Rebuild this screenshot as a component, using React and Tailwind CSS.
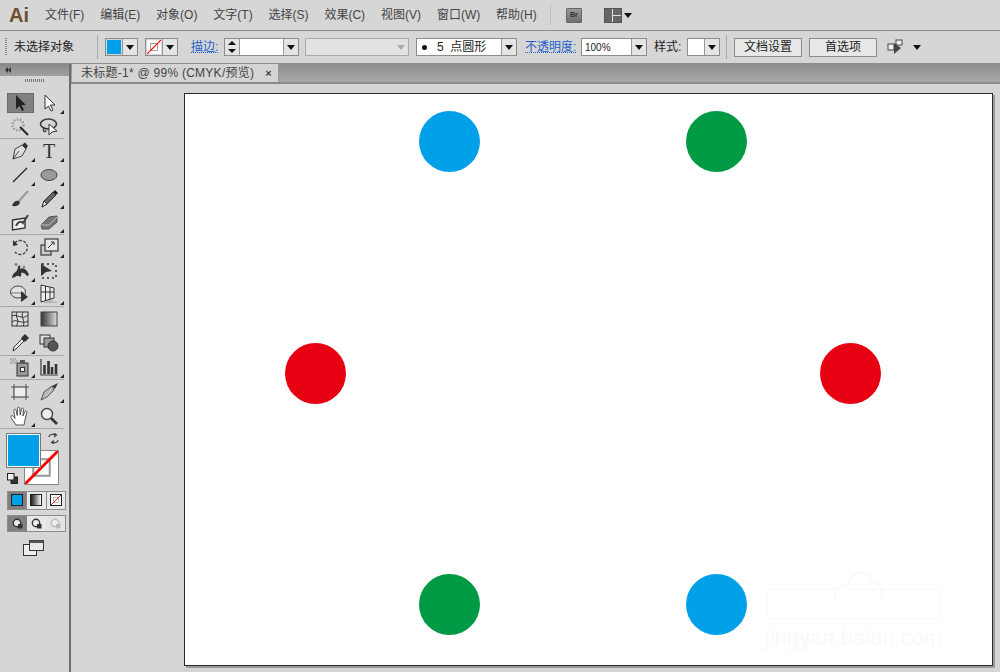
const S = { fill: "none", stroke: "#3a3a3a", strokeWidth: 1.2 };

function Ico({ children, w = 20, h = 20 }) {
  return (
    <svg width={w} height={h} viewBox="0 0 20 20" className="block">
      {children}
    </svg>
  );
}

const icons = {
  arrow: <path d="M6 2 L6 16 L9.5 13 L12 18 L14 17 L11.5 12 L16 12 Z" fill="#222" />,
  white: <path d="M6 2 L6 16 L9.5 13 L12 18 L14 17 L11.5 12 L16 12 Z" fill="#fff" stroke="#333" strokeWidth="1" />,
  magic: (
    <g>
      <circle cx="8" cy="8" r="5.5" fill="none" stroke="#999" strokeWidth="2.4" strokeDasharray="1.5 1.5" />
      <path d="M10 10 L18 18" stroke="#222" strokeWidth="2" />
    </g>
  ),
  lasso: (
    <g>
      <ellipse cx="9.5" cy="7" rx="8" ry="5" {...S} strokeWidth="1.6" />
      <path d="M5 11 C3 15 7 16 7 13" {...S} />
      <path d="M10 7 L10 18 L13 15 L18 14 Z" fill="#fff" stroke="#333" />
    </g>
  ),
  pen: (
    <g>
      <path d="M3 18 L5 8 L12 4 L16 8 L12 15 Z" fill="#ddd" stroke="#444" />
      <path d="M12 4 L15 1.5 L18 5 L16 8 Z" fill="#333" />
      <path d="M3 18 L9 10" stroke="#444" />
    </g>
  ),
  type: <text x="10" y="17" textAnchor="middle" fontFamily="Liberation Serif, serif" fontSize="20" fill="#333">T</text>,
  line: <path d="M3 17 L17 3" stroke="#222" strokeWidth="1.2" />,
  ellipse: <ellipse cx="10" cy="10" rx="8" ry="5.5" fill="#9a9a9a" stroke="#444" />,
  brush: (
    <g>
      <path d="M18 2 L9 12" stroke="#999" strokeWidth="2" />
      <path d="M2 17 C3 13 6 11 9 12 C11 14 9 18 2 17 Z" fill="#333" />
    </g>
  ),
  pencil: (
    <g>
      <path d="M3 18 L5 12 L14 3 L17 6 L8 15 Z" fill="#666" stroke="#333" />
      <path d="M14 3 L16 1 L19 4 L17 6 Z" fill="#222" />
      <path d="M3 18 L5 12 L8 15 Z" fill="#eee" stroke="#333" />
    </g>
  ),
  blob: (
    <g>
      <path d="M2.5 8 L15 6 L15 16 L2.5 18 Z" fill="#eee" stroke="#333" strokeWidth="1.4" />
      <path d="M6 14 C8 9 12 9 13 11 L18 3" stroke="#444" strokeWidth="2" fill="none" />
    </g>
  ),
  eraser: (
    <g>
      <path d="M2 13 L10 5 L18 4 L18 10 L10 17 L3 17 Z" fill="#777" stroke="#555" />
      <path d="M2 13 L10 13 L18 5" stroke="#bbb" fill="none" />
    </g>
  ),
  rotate: (
    <g>
      <path d="M5 6 A7 7 0 1 1 5 15" fill="none" stroke="#444" strokeWidth="1.3" strokeDasharray="3 1.4" />
      <path d="M3 3 L3 9 L8 8 Z" fill="#333" />
    </g>
  ),
  scale: (
    <g>
      <rect x="2" y="8" width="10" height="10" {...S} fill="#ccc" />
      <rect x="6" y="2" width="13" height="12" {...S} fill="#e4e4e4" />
      <path d="M9 11 L15 5 M12 5 H15 V8" stroke="#333" fill="none" />
    </g>
  ),
  warp: (
    <g>
      <path d="M2 17 C3 10 7 13 8 6 C9 3 11 4 10 8 C13 6 17 8 19 14 L17 15 C15 12 13 11 11 12 C12 15 10 17 9 15 C7 14 5 17 2 17 Z" fill="#333" />
      <circle cx="6" cy="3.5" r="1.4" fill="#777" />
      <circle cx="14" cy="6" r="1.2" fill="#777" />
    </g>
  ),
  free: (
    <g>
      <rect x="3" y="3" width="14" height="14" fill="none" stroke="#333" strokeDasharray="2 3" strokeWidth="1.5" />
      <path d="M2 3 L2 15 L7 11 L13 10 Z" fill="#333" />
    </g>
  ),
  shape: (
    <g>
      <ellipse cx="8" cy="8" rx="7.5" ry="6" fill="#e2e2e2" stroke="#444" />
      <path d="M1 9 H14" stroke="#777" />
      <path d="M11 7 L11 18 L18 13 Z" fill="#333" />
    </g>
  ),
  perspective: (
    <g>
      <path d="M11 16 L20 19 H4 Z" fill="#b5b5b5" />
      <path d="M2 1 L15 4 L15 14 L2 18 Z" fill="#eee" stroke="#333" />
      <path d="M6.5 2 V17 M11 3 V15.5 M2 8 L15 8" stroke="#333" />
    </g>
  ),
  mesh: (
    <g>
      <rect x="2" y="3" width="16" height="14" fill="#ddd" stroke="#333" />
      <path d="M2 7 C7 4 12 12 18 6 M2 13 C6 9 12 16 18 12 M7 3 C4 8 11 11 6 17 M13 3 C10 8 16 12 13 17" fill="none" stroke="#333" strokeWidth="1" />
    </g>
  ),
  gradient: (
    <g>
      <defs>
        <linearGradient id="tg" x1="0" x2="1" y1="0" y2="0">
          <stop offset="0" stopColor="#333" />
          <stop offset="1" stopColor="#ddd" />
        </linearGradient>
      </defs>
      <rect x="2" y="3" width="16" height="14" fill="url(#tg)" stroke="#444" />
    </g>
  ),
  dropper: (
    <g>
      <path d="M3 18 L4 14 L12 6 L14 8 L6 16 Z" fill="#eee" stroke="#333" />
      <path d="M11 5 L15 1 L19 5 L15 9 Z" fill="#333" />
    </g>
  ),
  blend: (
    <g>
      <rect x="1" y="2" width="10" height="9" fill="#ddd" stroke="#333" />
      <rect x="5" y="5" width="10" height="9" fill="#999" stroke="#333" />
      <circle cx="14" cy="13" r="5" fill="#555" stroke="#333" />
    </g>
  ),
  spray: (
    <g>
      <rect x="7" y="6" width="11" height="13" fill="#999" stroke="#333" />
      <rect x="10" y="3" width="5" height="3" fill="#555" />
      <rect x="10.5" y="10.5" width="4" height="4" fill="#eee" stroke="#333" />
      <path d="M0 2 H7 M1 4 H8 M0 6 H6" stroke="#777" strokeDasharray="1.4 1" />
    </g>
  ),
  chart: (
    <g>
      <path d="M2 2 V18 H19" {...S} />
      <path d="M5.5 8 V17" stroke="#333" strokeWidth="2.6" />
      <path d="M9.5 4 V17" stroke="#333" strokeWidth="2.6" />
      <path d="M13 10 V17" stroke="#333" strokeWidth="2.6" />
      <path d="M17 7 V17" stroke="#333" strokeWidth="2.6" />
    </g>
  ),
  artboard: (
    <g>
      <rect x="4" y="5" width="12" height="10" fill="#eee" stroke="#333" />
      <path d="M1 5 H4 M16 5 H19 M1 15 H4 M16 15 H19 M4 2 V5 M16 2 V5 M4 15 V18 M16 15 V18" stroke="#555" />
    </g>
  ),
  slice: (
    <g>
      <path d="M2 18 L5 10 L13 4 L15 8 L8 15 Z" fill="#bbb" stroke="#555" />
      <path d="M13 4 L19 1 L16 7 Z" fill="#333" />
    </g>
  ),
  hand: (
    <path
      d="M6 19 L1 11.5 C0.5 9.5 2.5 9 3.5 10.5 L5 12.5 L3.8 4.5 C3.6 3 5.6 2.8 6 4.3 L7.3 9.5 L7.5 2.3 C7.6 0.8 9.6 0.8 9.7 2.3 L10.2 9 L11.5 3 C11.8 1.6 13.6 2 13.5 3.5 L12.9 10 L15 5.5 C15.6 4.3 17.2 5 16.8 6.4 L15 14 L14 19 Z"
      fill="#fff"
      stroke="#444"
      strokeWidth="0.9"
    />
  ),
  zoom: (
    <g>
      <circle cx="8" cy="8" r="5.5" fill="#eee" stroke="#444" strokeWidth="1.4" />
      <path d="M12 12 L18 18" stroke="#333" strokeWidth="2.6" />
    </g>
  ),
};

function Tool({ name, more, active }) {
  return (
    <div className="relative flex h-full w-[29.5px] items-center justify-center">
      {active && <div className="absolute left-[2px] top-[2px] h-[20px] w-[27px] border border-[#6a6a6a] bg-[#808080]" />}
      <div className="relative">
        <Ico>{icons[name]}</Ico>
      </div>
      {more && <div className="absolute bottom-[1px] right-0 h-0 w-0 border-b-[4px] border-l-[4px] border-b-[#222] border-l-transparent" />}
    </div>
  );
}

const groups = [
  [
    [["arrow", false, true], ["white", true]],
    [["magic"], ["lasso"]],
  ],
  [
    [["pen", true], ["type", true]],
    [["line", true], ["ellipse", true]],
    [["brush"], ["pencil", true]],
    [["blob"], ["eraser", true]],
  ],
  [
    [["rotate", true], ["scale", true]],
    [["warp", true], ["free"]],
    [["shape", true], ["perspective", true]],
  ],
  [
    [["mesh"], ["gradient"]],
    [["dropper", true], ["blend"]],
  ],
  [[["spray", true], ["chart", true]]],
  [
    [["artboard"], ["slice", true]],
    [["hand", true], ["zoom"]],
  ],
];

function Caret({ light }) {
  return <div className={`h-0 w-0 border-x-[4px] border-t-[5px] border-x-transparent ${light ? "border-t-[#aaa]" : "border-t-[#111]"}`} />;
}

function Drop({ w = 15, light }) {
  return (
    <div className="flex h-full shrink-0 items-center justify-center border-l border-[#999] bg-[#e4e4e4]" style={{ width: w }}>
      <Caret light={light} />
    </div>
  );
}

function Box({ className = "", children }) {
  return <div className={`flex h-[18px] shrink-0 items-stretch border border-[#8c8c8c] ${className}`}>{children}</div>;
}

function NoneSwatch({ className = "" }) {
  return (
    <svg viewBox="0 0 16 16" className={className} preserveAspectRatio="none">
      <rect width="16" height="16" fill="#fff" />
      <rect x="4" y="4" width="8" height="8" fill="none" stroke="#999" />
      <path d="M0 16 L16 0" stroke="#f00" strokeWidth="1.4" />
    </svg>
  );
}

function Btn({ children, ml }) {
  return (
    <div className={`flex h-[19px] w-[68px] shrink-0 items-center justify-center border border-[#8c8c8c] bg-[#e8e8e8] text-[12px] text-[#222] ${ml}`}>
      {children}
    </div>
  );
}

const menu = ["文件(F)", "编辑(E)", "对象(O)", "文字(T)", "选择(S)", "效果(C)", "视图(V)", "窗口(W)", "帮助(H)"];

const circles = [
  ["left-[234px] top-[17px]", "bg-[#00a0e9]"],
  ["left-[501px] top-[17px]", "bg-[#009944]"],
  ["left-[100px] top-[249px]", "bg-[#e60012]"],
  ["left-[635px] top-[249px]", "bg-[#e60012]"],
  ["left-[234px] top-[480px]", "bg-[#009944]"],
  ["left-[501px] top-[480px]", "bg-[#00a0e9]"],
];

export default function App() {
  return (
    <div
      className="flex h-[672px] w-[1000px] flex-col overflow-hidden bg-[#d4d4d4] text-[#333]"
      style={{ fontFamily: '"Liberation Sans", "Noto Sans CJK SC", sans-serif' }}
    >
      {/* Menu bar */}
      <header className="flex h-[30px] shrink-0 items-center bg-[#d6d6d6]">
        <span className="ml-[9px] w-[36px] text-[20px] font-bold text-[#6e4f2e]">Ai</span>
        <nav className="flex gap-[15.9px] text-[12px] text-[#444]">
          {menu.map((m) => (
            <span key={m}>{m}</span>
          ))}
        </nav>
        <div className="ml-[13px] h-[20px] w-px bg-[#bdbdbd]" />
        <div className="ml-[15px] flex h-[15px] w-[16px] items-center justify-center rounded-[1px] border border-[#666] bg-gradient-to-b from-[#9a9a9a] to-[#6f6f6f] text-[7px] font-bold text-[#333]">
          Br
        </div>
        <div className="ml-[22px] grid h-[15px] w-[18px] grid-cols-2 gap-px border border-[#555] bg-[#ddd]">
          <div className="row-span-2 bg-[#666]" />
          <div className="bg-[#666]" />
          <div className="bg-[#666]" />
        </div>
        <div className="ml-[2px]">
          <Caret />
        </div>
      </header>

      {/* Control bar */}
      <div className="flex h-[34px] shrink-0 items-center border-y border-[#8e8e8e] bg-[#d6d6d6] text-[12px] text-[#222]">
        <div className="ml-[5px] h-[18px] w-[2px] bg-[repeating-linear-gradient(to_bottom,#888_0,#888_1px,#d6d6d6_1px,#d6d6d6_2px)]" />
        <span className="ml-[7px] w-[60px]">未选择对象</span>
        <div className="ml-[23px] h-[24px] w-px bg-[#aaa]" />
        <Box className="ml-[7px] w-[33px]">
          <div className="m-px flex-1 bg-[#00a0e9]" />
          <Drop />
        </Box>
        <Box className="ml-[7px] w-[33px]">
          <NoneSwatch className="m-px h-[14px] w-[14px]" />
          <Drop />
        </Box>
        <span className="ml-[13px] w-[33px] text-[#1e62c8] underline decoration-dotted">描边:</span>
        <Box className="w-[75px] bg-white">
          <div className="flex w-[15px] shrink-0 flex-col items-center justify-around border-r border-[#999] bg-[#e4e4e4]">
            <div className="h-0 w-0 border-x-[4px] border-b-[4px] border-x-transparent border-b-[#111]" />
            <div className="h-0 w-0 border-x-[4px] border-t-[4px] border-x-transparent border-t-[#111]" />
          </div>
          <div className="flex-1" />
          <Drop />
        </Box>
        <Box className="ml-[6px] w-[104px] border-[#aaa] bg-[#e2e2e2]">
          <div className="flex-1" />
          <div className="flex w-[15px] items-center justify-center">
            <Caret light />
          </div>
        </Box>
        <Box className="ml-[7px] w-[101px] bg-white">
          <div className="flex flex-1 items-center whitespace-pre pl-[5px] text-[12px]">
            <span className="h-[5px] w-[5px] rounded-full bg-[#111]" />
            <span>{"   5  点圆形"}</span>
          </div>
          <Drop />
        </Box>
        <span className="ml-[8px] w-[56px] whitespace-nowrap text-[#1e62c8] underline decoration-dotted">不透明度:</span>
        <Box className="w-[66px] bg-white">
          <div className="flex flex-1 items-center pl-[3px] text-[10px]">100%</div>
          <Drop />
        </Box>
        <span className="ml-[7px] w-[33px]">样式:</span>
        <Box className="w-[33px] bg-white">
          <div className="flex-1" />
          <Drop />
        </Box>
        <div className="ml-[6px] h-[24px] w-px bg-[#aaa]" />
        <Btn ml="ml-[7px]">文档设置</Btn>
        <Btn ml="ml-[7px]">首选项</Btn>
        <svg width="17" height="16" viewBox="0 0 17 16" className="ml-[10px] shrink-0">
          <rect x="1" y="5" width="6" height="6" fill="#eee" stroke="#444" />
          <rect x="9" y="1" width="6" height="5" fill="#eee" stroke="#444" />
          <path d="M7 4 L7 15 L14 9 Z" fill="#444" />
        </svg>
        <div className="ml-[9px]">
          <Caret />
        </div>
      </div>

      <div className="flex min-h-0 flex-1">
        {/* Tools panel */}
        <aside className="flex w-[71px] shrink-0 flex-col border-r-2 border-[#6e6e6e] bg-[#d6d6d6]">
          <div className="flex h-[12px] shrink-0 items-center bg-gradient-to-b from-[#8a8a8a] to-[#a0a0a0] pl-[5px]">
            <div className="h-0 w-0 border-y-[3px] border-r-[3px] border-y-transparent border-r-[#333]" />
            <div className="h-0 w-0 border-y-[3px] border-r-[3px] border-y-transparent border-r-[#333]" />
          </div>
          <div className="flex h-[15px] shrink-0 items-start justify-center pt-[3px]">
            <div className="h-[3px] w-[20px] bg-[repeating-linear-gradient(to_right,#777_0,#777_1px,#d6d6d6_1px,#d6d6d6_2px)]" />
          </div>
          {groups.map((g, i) => (
            <div key={i} className="mr-[5px] border-b border-[#a8a8a8] pl-[5px]">
              {g.map((row, j) => (
                <div key={j} className="flex h-[23.7px]">
                  {row.map(([n, more, active]) => (
                    <Tool key={n} name={n} more={more} active={active} />
                  ))}
                </div>
              ))}
            </div>
          ))}

          {/* Fill & stroke */}
          <div className="relative ml-[6px] mt-[4px] h-[52px] w-[53px] shrink-0">
            <div className="absolute left-[18px] top-[17px] flex h-[35px] w-[35px] items-center justify-center border border-[#888] bg-white">
              <NoneSwatch className="h-full w-full" />
            </div>
            <div className="absolute left-0 top-0 h-[35px] w-[35px] border border-[#777] bg-white p-px">
              <div className="h-full w-full bg-[#00a0e9]" />
            </div>
            <svg width="11" height="11" viewBox="0 0 11 11" className="absolute left-[42px] top-[0px]">
              <path d="M1 4 C1 1 5 1 8 2 M6 0 L8.5 2 L6 4 M10 7 C10 9 8 10 4 9.5 M6 7.5 L3.5 9.5 L6 11" fill="none" stroke="#444" strokeWidth="1.2" />
            </svg>
            <svg width="11" height="11" viewBox="0 0 11 11" className="absolute left-[1px] top-[40px]">
              <rect x="4" y="4" width="6.5" height="6.5" fill="#333" stroke="#222" />
              <rect x="0.5" y="0.5" width="6.5" height="6.5" fill="#eee" stroke="#222" />
            </svg>
          </div>

          <div className="ml-[7px] mt-[6px] flex h-[19px] w-[59px] shrink-0 border border-[#8c8c8c]">
            <div className="flex flex-1 items-center justify-center bg-[#808080]">
              <div className="h-[12px] w-[12px] border border-[#222] bg-[#00a0e9]" />
            </div>
            <div className="flex flex-1 items-center justify-center border-x border-[#8c8c8c] bg-[#e8e8e8]">
              <div className="h-[12px] w-[12px] border border-[#222] bg-gradient-to-r from-[#222] to-white" />
            </div>
            <div className="flex flex-1 items-center justify-center bg-[#e8e8e8]">
              <NoneSwatch className="h-[12px] w-[12px] border border-[#222]" />
            </div>
          </div>

          <div className="ml-[7px] mt-[5px] flex h-[17px] w-[59px] shrink-0 border border-[#8c8c8c]">
            {[
              ["bg-[#808080]", "#333"],
              ["bg-[#e8e8e8]", "#333"],
              ["bg-[#e4e4e4]", "#bbb"],
            ].map(([bg, c], i) => (
              <div key={i} className={`flex flex-1 items-center justify-center ${bg}`}>
                <svg width="11" height="11" viewBox="0 0 11 11">
                  <circle cx="5" cy="5" r="3.7" fill="#eee" stroke={c} strokeWidth="1.4" />
                  <rect x="6" y="6" width="4.5" height="4.5" fill={c} />
                </svg>
              </div>
            ))}
          </div>

          <div className="ml-[23px] mt-[8px] shrink-0">
            <svg width="21" height="16" viewBox="0 0 21 16" className="block">
              <rect x="0.5" y="4.5" width="13" height="11" fill="#eee" stroke="#333" />
              <rect x="6.5" y="0.5" width="14" height="10" fill="#e8e8e8" stroke="#333" />
              <rect x="6.5" y="0.5" width="14" height="2.5" fill="#555" />
            </svg>
          </div>
        </aside>

        {/* Document area */}
        <main className="flex min-w-0 flex-1 flex-col">
          <div className="flex h-[20px] shrink-0 items-end border-b-2 border-[#8a8a8a] bg-gradient-to-b from-[#8e8e8e] to-[#a8a8a8] pl-px">
            <div className="flex h-[18px] w-[207px] items-center border-r border-[#999] bg-[#d4d4d4] pl-[9px] text-[12px] text-[#444]">
              <span className="whitespace-nowrap tracking-[0.26px]">未标题-1* @ 99% (CMYK/预览)</span>
              <span className="ml-[11px] text-[11px] font-bold leading-none text-[#444]">×</span>
            </div>
          </div>
          <div className="min-h-0 flex-1 bg-[#d4d4d4] pl-[113px] pt-[9px]">
            <div className="relative h-[573px] w-[809px] border border-[#2a2a2a] bg-white shadow-[2px_2px_0_#9a9a9a]">
              {circles.map(([pos, bg]) => (
                <div key={pos} className={`absolute h-[61px] w-[61px] rounded-full ${pos} ${bg}`} />
              ))}
              <div className="absolute left-[582px] top-[495px] h-[30px] w-[173px] rounded-[2px] border border-[#f8f8f8]" />
              <svg width="60" height="40" viewBox="0 0 60 40" className="absolute left-[644px] top-[470px]">
                <path d="M6 34 C4 20 18 20 20 22 C20 6 40 4 42 18 C52 18 54 28 52 34" fill="none" stroke="#f8f8f8" strokeWidth="1.5" />
              </svg>
              <span className="absolute left-[580px] top-[533px] text-[22px] leading-none text-[#f9f9f9]">jingyan.baidu.com</span>
            </div>
          </div>
        </main>
      </div>
    </div>
  );
}
